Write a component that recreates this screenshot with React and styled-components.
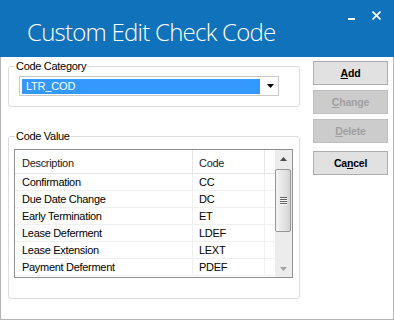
import React from "react";
import styled, { createGlobalStyle } from "styled-components";

const GlobalStyle = createGlobalStyle`
  body {
    margin: 0;
    background: #ffffff;
    font-family: "Liberation Sans", Arial, sans-serif;
  }
`;

const Window = styled.div`
  width: 394px;
  height: 320px;
  box-sizing: border-box;
  display: flex;
  flex-direction: column;
  background: #ffffff;
  border: 1px solid #b4b4b4;
  border-top: none;
`;

const TitleBar = styled.div`
  height: 57px;
  margin: 0 -1px;
  flex-shrink: 0;
  display: flex;
  align-items: flex-start;
  background: #1172bc;
  color: #ffffff;
`;

const Title = styled.div`
  padding: 19px 0 0 27px;
  font-family: "Open Sans", "Liberation Sans", sans-serif;
  font-weight: 300;
  font-size: 24px;
  line-height: 25px;
  letter-spacing: -0.75px;
  white-space: nowrap;
`;

const Controls = styled.div`
  margin-left: auto;
  display: flex;
  align-items: flex-start;
  gap: 17px;
  padding: 11px 13px 0 0;

  & svg {
    display: block;
  }
`;

const Body = styled.div`
  display: flex;
  padding-left: 7px;
`;

const LeftColumn = styled.div`
  width: 292px;
  display: flex;
  flex-direction: column;
`;

const Group = styled.div`
  display: flex;
  flex-direction: column;
  align-items: flex-start;
  margin-top: ${({ $top }) => $top}px;
  padding: ${({ $pad }) => $pad};
  border: 1px solid #dcdcdc;
  border-radius: 3px;
`;

const Caption = styled.span`
  margin: -7px 0 ${({ $gap }) => $gap}px ${({ $indent }) => $indent}px;
  padding: 0 1px;
  background: #ffffff;
  font-size: 11px;
  line-height: 13px;
  letter-spacing: -0.3px;
  color: #000000;
`;

const Combo = styled.div`
  width: 260px;
  height: 20px;
  box-sizing: border-box;
  display: flex;
  align-items: center;
  border: 1px solid #c9c9c9;
  background: #ffffff;
`;

const Selected = styled.div`
  width: 238px;
  height: 15px;
  margin-left: 2px;
  padding-left: 4px;
  box-sizing: border-box;
  background: #3399ff;
  color: #ffffff;
  font-size: 11px;
  line-height: 15px;
  letter-spacing: -0.2px;
`;

const DropArrow = styled.svg`
  margin-left: auto;
  margin-right: 4px;
  display: block;
`;

const List = styled.div`
  width: 279px;
  height: 129px;
  box-sizing: border-box;
  display: flex;
  border: 1px solid #8e8f8f;
  background: #ffffff;
`;

const Grid = styled.div`
  flex: 1;
  display: grid;
  grid-template-columns: 178px 72px 1fr;
  grid-template-rows: 24px;
  grid-auto-rows: 17px;
  align-content: start;
  overflow: hidden;
`;

const HeadCell = styled.div`
  height: 24px;
  box-sizing: border-box;
  padding: 2px 0 0 ${({ $pad }) => $pad}px;
  display: flex;
  align-items: center;
  border-bottom: 1px solid #e5e5e5;
  border-right: ${({ $last }) => ($last ? "none" : "1px solid #e5e5e5")};
  font-size: 11px;
  letter-spacing: -0.3px;
  color: #1b1b1b;
`;

const Cell = styled.div`
  height: 17px;
  box-sizing: border-box;
  padding-left: ${({ $pad }) => $pad}px;
  display: flex;
  align-items: center;
  border-bottom: 1px solid #f0f0f0;
  border-right: ${({ $last }) => ($last ? "none" : "1px solid #f0f0f0")};
  font-size: 11px;
  letter-spacing: -0.3px;
  color: #000000;
  white-space: nowrap;
`;

const HeadRow = styled.div`
  display: contents;
`;

const Scrollbar = styled.div`
  width: 17px;
  display: flex;
  flex-direction: column;
  background: #ececec;
`;

const ScrollButton = styled.div`
  height: 17px;
  flex-shrink: 0;
  display: flex;
  align-items: center;
  justify-content: center;
`;

const Track = styled.div`
  flex: 1;
  padding: 2px 1px 0 0;
`;

const Thumb = styled.div`
  height: 63px;
  box-sizing: border-box;
  display: flex;
  flex-direction: column;
  align-items: center;
  justify-content: center;
  gap: 1px;
  border: 1px solid #979797;
  border-radius: 2px;
  background: linear-gradient(to right, #f4f4f4, #e4e4e4 55%, #d4d4d4);
`;

const Grip = styled.span`
  width: 7px;
  height: 1px;
  background: #606060;
  box-shadow: 0 1px 0 #fafafa;
`;

const ButtonColumn = styled.div`
  width: 75px;
  margin: 4px 0 0 13px;
  display: flex;
  flex-direction: column;
  gap: 5px;
`;

const Button = styled.button`
  width: 75px;
  height: 24px;
  margin-top: ${({ $extra }) => ($extra ? 3 : 0)}px;
  padding: 0;
  border: 1px solid ${({ disabled }) => (disabled ? "#bfbfbf" : "#adadad")};
  background: ${({ disabled }) => (disabled ? "#cccccc" : "#e1e1e1")};
  color: ${({ disabled }) => (disabled ? "#a0a0a0" : "#000000")};
  font-family: "Liberation Sans", Arial, sans-serif;
  font-size: 10.5px;
  font-weight: bold;
  letter-spacing: -0.2px;
`;

const rows = [
  ["Confirmation", "CC"],
  ["Due Date Change", "DC"],
  ["Early Termination", "ET"],
  ["Lease Deferment", "LDEF"],
  ["Lease Extension", "LEXT"],
  ["Payment Deferment", "PDEF"],
];

export default function App() {
  return (
    <>
      <GlobalStyle />
      <Window>
        <TitleBar>
          <Title>Custom Edit Check Code</Title>
          <Controls>
            <svg width="7" height="9" viewBox="0 0 7 9">
              <rect x="0" y="7" width="7" height="2" fill="#ffffff" />
            </svg>
            <svg width="9" height="9" viewBox="0 0 9 9">
              <path d="M0.5 0.5 L8.5 8.5 M8.5 0.5 L0.5 8.5" stroke="#ffffff" strokeWidth="1.6" />
            </svg>
          </Controls>
        </TitleBar>
        <Body>
          <LeftColumn>
            <Group $top={9} $pad="0 20px 10px 10px">
              <Caption $gap={3} $indent={-4}>Code Category</Caption>
              <Combo>
                <Selected>LTR_COD</Selected>
                <DropArrow width="7" height="4" viewBox="0 0 7 4">
                  <path d="M0 0 H7 L3.5 4 Z" fill="#000000" />
                </DropArrow>
              </Combo>
            </Group>
            <Group $top={29} $pad="0 6px 20px 5px">
              <Caption $gap={6} $indent={1}>Code Value</Caption>
              <List>
                <Grid>
                  <HeadRow>
                    <HeadCell $pad={7}>Description</HeadCell>
                    <HeadCell $pad={6}>Code</HeadCell>
                    <HeadCell $last />
                  </HeadRow>
                  {rows.map(([desc, code]) => (
                    <React.Fragment key={code}>
                      <Cell $pad={7}>{desc}</Cell>
                      <Cell $pad={6}>{code}</Cell>
                      <Cell $last />
                    </React.Fragment>
                  ))}
                </Grid>
                <Scrollbar>
                  <ScrollButton>
                    <svg width="7" height="4" viewBox="0 0 7 4">
                      <path d="M0 4 H7 L3.5 0 Z" fill="#4d4d4d" />
                    </svg>
                  </ScrollButton>
                  <Track>
                    <Thumb>
                      <Grip />
                      <Grip />
                      <Grip />
                      <Grip />
                    </Thumb>
                  </Track>
                  <ScrollButton>
                    <svg width="7" height="4" viewBox="0 0 7 4">
                      <path d="M0 0 H7 L3.5 4 Z" fill="#a3a3a3" />
                    </svg>
                  </ScrollButton>
                </Scrollbar>
              </List>
            </Group>
          </LeftColumn>
          <ButtonColumn>
            <Button>
              <u>A</u>dd
            </Button>
            <Button disabled>
              <u>C</u>hange
            </Button>
            <Button disabled>
              <u>D</u>elete
            </Button>
            <Button $extra>
              Ca<u>n</u>cel
            </Button>
          </ButtonColumn>
        </Body>
      </Window>
    </>
  );
}
